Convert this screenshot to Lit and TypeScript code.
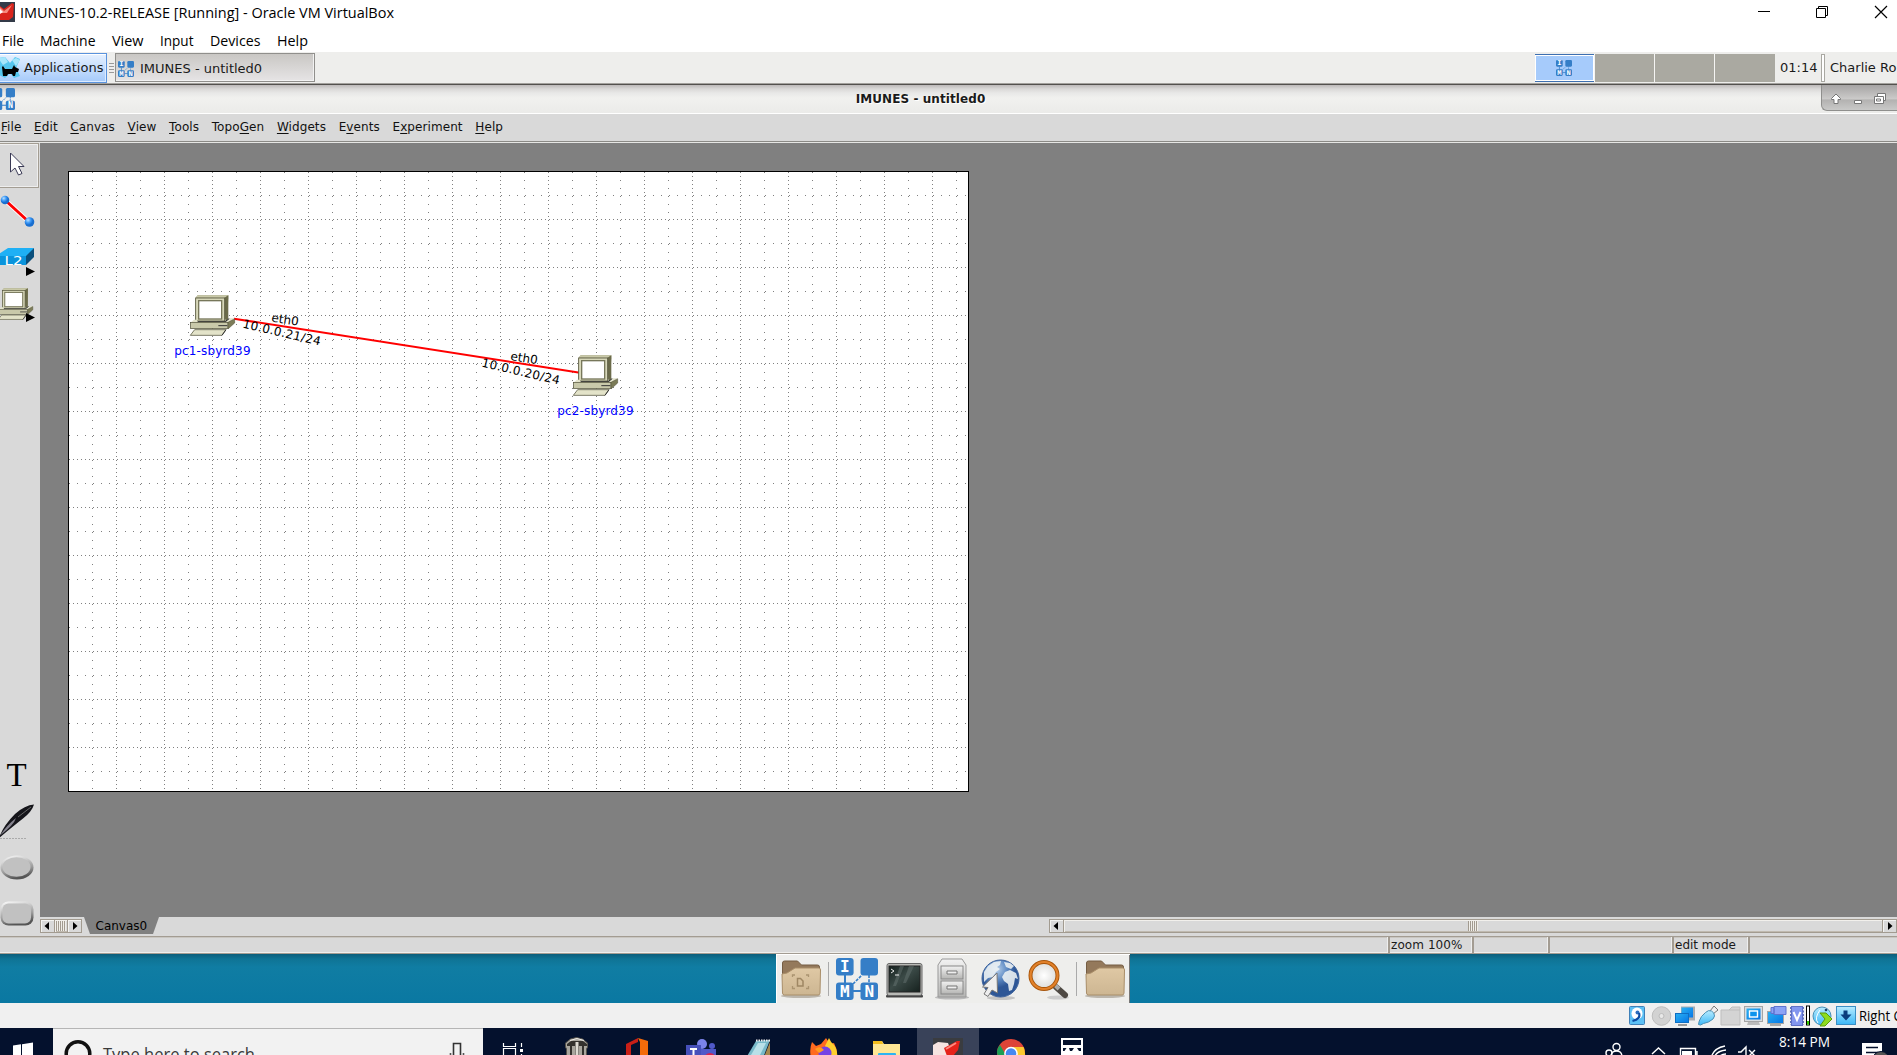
import { LitElement, html, svg, css, TemplateResult } from "lit";
import { customElement } from "lit/decorators.js";

/* ---------- shared drawing helpers ---------- */

const label = (text: string, width: number, height: number, base: number, cls = "seg15") => html`
  <svg class="lbl" width=${width} height=${height}><text class=${cls} x="0" y=${base} textLength=${width} lengthAdjust="spacingAndGlyphs">${text}</text></svg>`;

const logo = (size: number, leftLetters = true) => html`
  <svg class="lbl" width=${size} height=${size} viewBox="0 0 42 42">
    <path d="M17 26l9-9M33 17v9" stroke="#357ec7" stroke-width="1.6" stroke-dasharray="3 1.2" fill="none"/>
    <path d="M9 17v9M17 33h9" stroke="#357ec7" stroke-width="2" fill="none"/>
    <g fill="#357ec7"><rect width="17.6" height="17.6" rx="3"/><rect x="24.5" width="17.5" height="17.6" rx="3"/><rect y="24.5" width="17.6" height="17.5" rx="3"/><rect x="24.5" y="24.5" width="17.5" height="17.5" rx="3"/></g>
    <g class=${size < 20 ? "mono tiny" : "mono"} fill="#fff">${leftLetters ? svg`<text x="8.8" y="14.200">I</text><text x="8.8" y="38.500">M</text>` : ""}<text x="33.3" y="38.5">N</text></g>
  </svg>`;

/* Beige desktop computer, drawn on a 135 x 123 grid. */
const pc = svg`
  <path d="M17 8 23 1h92v9l-4 62H17z" fill="#8d8d6c"/>
  <path d="M17 8 23 1h92l-12 8z" fill="#c9c9a8"/><path d="M103 9l12-8v70l-9 7z" fill="#6b6b4a"/>
  <rect x="17" y="9" width="87" height="69" fill="#d8d8ba" stroke="#55553c" stroke-width="2.5"/>
  <rect x="26" y="17" width="69" height="55" fill="#fff" stroke="#77775a" stroke-width="4"/>
  <path d="M22 78h84l12-9v9l-8 5H22z" fill="#111"/>
  <path d="M1 83 12 74h8l3 6h85l12-10h14l-18 13z" fill="#e4e4cc"/>
  <rect x="1" y="82" width="113" height="19" fill="#c9c9aa" stroke="#4c4c36" stroke-width="2"/>
  <path d="M114 82l20-11v13l-20 18z" fill="#7c7c58" stroke="#4c4c36" stroke-width="1.5"/>
  <path d="M85 92h27" stroke="#333" stroke-width="3"/>
  <path d="M14 104h94l-12 17H1z" fill="#e3e3c9" stroke="#5b5b42" stroke-width="2.4"/><path d="M96 121l12-17" stroke="#333" stroke-width="3"/>`;

const folder = (mark: boolean) => html`
  <svg class="lbl" width="48" height="49" viewBox="0 0 48 49">
    <defs><linearGradient id="fg" x2="0" y2="1"><stop stop-color="#dfc8a4"/><stop offset="1" stop-color="#cdb692"/></linearGradient></defs>
    <ellipse cx="24" cy="41" rx="20" ry="2" fill="#bbb6ad"/>
    <path d="M5.500 8q0-2 2-2h13l4 4h16q2 0 2 2v10H5.500z" fill="#94795b" stroke="#755d43"/>
    <path d="M5 19l5-1 8-5h24q1.500 0 1.500 2l-.5 23q0 2-2 2H7.500q-2 0-2-2z" fill="url(#fg)" stroke="#a98e69"/>
    ${mark ? svg`<path d="M20.500 23.500h3l2.500 2.500v5h-5.500z" fill="none" stroke="#9f8763" stroke-width="1.500"/><path d="M15.500 22v-2h2.500M29 20h2.500v2M15.500 31v2.500h2.500M29 33.500h2.500V31" fill="none" stroke="#ab9470" stroke-width="1.300"/>` : ""}
  </svg>`;

@customElement("app-root")
export class AppRoot extends LitElement {
  static styles = css`
    :host { display: block; width: 1897px; height: 1055px; overflow: hidden; background: #fff; font: 12px "DejaVu Sans", sans-serif; color: #1a1a1a; }
    * { box-sizing: border-box; }
    .screen { display: flex; flex-direction: column; width: 1897px; height: 1055px; overflow: hidden; white-space: nowrap; }
    svg { display: block; flex: none; overflow: hidden; }
    .lbl { overflow: visible; }
    .seg15 { font: 15px "Open Sans", sans-serif; fill: #000; }
    .seg18 { font: 18px "Open Sans", sans-serif; fill: #3a3a3a; }
    .clock { font: 15px "Open Sans", sans-serif; fill: #fff; }
    .mono { font: bold 16px "DejaVu Sans Mono", monospace; text-anchor: middle; }
    .mono.tiny { font: bold 19px "Liberation Mono", monospace; text-rendering: geometricPrecision; }

    .wintitle { display: flex; height: 26px; padding: 0 8px 0 0; }
    .wintitle .name { margin-left: 5px; }
    .wintitle .ctl { margin-left: auto; }
    .winmenu { display: flex; height: 26px; padding-left: 1.5px; gap: 16.5px; }

    .panel { display: flex; height: 33px; background: #eeeeec; border-bottom: 1px solid #53514e; box-shadow: inset 0 -1px #a3a19d; }
    .apps { display: flex; width: 107px; height: 30px; margin-top: 1px; border: 1px solid #5a93dd; border-left: 0; box-shadow: inset 0 1px #fff, inset -1px -1px #dcebff; background: linear-gradient(#e6f1ff, #a5cafa); font-size: 13px; line-height: 28px; }
    .grip { width: 5px; height: 10px; margin: 11px 1px 0 2px; background: repeating-linear-gradient(#999 0 1px, #eee 1px 3px); }
    .task { display: flex; width: 200px; height: 29px; margin-top: 1px; border: 1px solid #908f8c; background: linear-gradient(#c9c7c4, #e6e4e5); box-shadow: inset -1px -1px #f2f2f2; font-size: 13px; line-height: 30px; padding: 7px 0 0 2px; }
    .task span { margin: -7px 0 0 6px; }
    .pager { display: flex; margin: 2px 0 0 auto; height: 28px; gap: 1px; background: #f5f5f3; }
    .pager div { width: 59px; height: 28px; background: #aaa9a1; }
    .pager .last { width: 60px; }
    .pager .on { display: flex; justify-content: center; padding: 5px 2px 0 0; background: #a6cbfb; border: 1px solid #3d6fb0; border-width: 1px 0; box-shadow: inset 0 0 0 1px #fff; }
    .time { width: 46px; font-size: 13px; line-height: 31px; padding-left: 5px; }
    .sep { width: 4px; height: 28px; margin-top: 2px; border: 1px solid #a9a8a2; background: #fff; }
    .user { width: 72px; overflow: hidden; padding-left: 5px; font-size: 13px; line-height: 31px; }

    .apptitle { display: grid; grid-template-columns: 76px 1fr 76px; height: 29px; border-bottom: 1px solid #fff; background: linear-gradient(#bcb9b9 0, #dad9d8 4px, #e8e8e7 8px, #f1f1ef 13px, #ebebe9 100%); }
    .apptitle .ico { padding-top: 3px; }
    .apptitle b { text-align: center; line-height: 29px; padding-right: 56px; text-shadow: 1px 1px #fff; color: #1a1a1a; letter-spacing: .08px; }
    .wbtn { height: 26px; border: solid #8f8f8d; border-width: 0 0 1px 1px; border-bottom-left-radius: 6px; background: linear-gradient(#a6a4a4, #cbcac9 55%, #b3b2b1 60%, #c9c9c8); overflow: hidden; }

    .menu { display: flex; gap: 12.7px; height: 29px; padding-left: 1px; background: #d9d9d9; line-height: 26px; letter-spacing: .08px; border-bottom: 1px solid #e6e6e4; box-shadow: inset 0 -1px #8b8a86; color: #111; }
    .menu u { text-underline-offset: 2px; text-decoration-thickness: 1px; }

    .body { display: flex; height: 793px; background: #d9d9d9; }
    .tools { display: flex; flex-direction: column; width: 40px; }
    .tools .gap { flex: 1; }
    .tool { height: 46px; width: 40px; }
    .sel { height: 45px; width: 39px; margin-bottom: 1px; border: 1px solid #a39d93; border-left: 0; box-shadow: inset -1px -1px #eee, inset 0 1px #eee; }
    .work { display: flex; flex-direction: column; width: 1857px; }
    .area { height: 774px; background: #808080; padding: 28px 0 0 28px; }
    .grid { stroke: #808080; fill: none; shape-rendering: crispEdges; }
    .net { font: 12px "DejaVu Sans", sans-serif; }
    .ip { letter-spacing: .28px; }
    .node { fill: #0000ff; text-anchor: middle; letter-spacing: .15px; }

    .tabs { display: flex; height: 19px; }
    .hs { display: flex; height: 14px; margin-top: 2px; background: #d9d9d9; border: 1px solid #a29b90; }
    .hs.small { width: 42px; }
    .hs .b { width: 13px; height: 12px; box-shadow: inset 1px 1px #f4f4f2; }
    .hs .thumb { flex: 1; border: solid #a29b90; border-width: 0 1px; box-shadow: inset 1px 1px #f2f0ec, inset 0 -1px #c0bab0; display: flex; justify-content: center; }
    .lines { width: 10px; height: 10px; margin-top: 1px; background: repeating-linear-gradient(90deg, #a29b90 0 1px, #f0eee9 1px 2px); }
    .hs.big { width: 848px; margin-left: auto; }
    .tab { margin-left: 2px; }

    .status { display: flex; height: 18px; background: #d9d9d9; border-top: 1px solid #a39c92; border-bottom: 1px solid #a39c92; line-height: 16px; box-shadow: inset 0 1px #c9c6c1, inset 0 -1px #f0efec; }
    .status div { border-right: 2px solid #a39c92; padding-left: 1px; box-shadow: inset -1px 0 #eee; }
    .c0 { width: 1390px; } .c1 { width: 84px; letter-spacing: .08px; } .c2 { width: 76px; } .c3 { width: 124px; } .c4 { width: 76px; }

    .desk { display: flex; height: 49px; padding-left: 776px; background: linear-gradient(#0c5e7b 0, #0f7495 5px, #107da3 13px, #0a78a2 100%); }
    .dock { display: flex; width: 354px; height: 49px; background: #eeeeec; border: solid #fff; border-width: 1px 0 0 1px; box-shadow: inset -1px 0 #777; }
    .dsep { width: 8px; height: 34px; margin-top: 7px; background: linear-gradient(90deg, transparent 3px, #aaa 3px 4px, transparent 4px); }

    .vbstat { display: flex; justify-content: flex-end; height: 25px; background: #f0f0f0; }
    .right { width: 40px; padding-left: 2px; overflow: hidden; }

    .bar { display: flex; height: 27px; background: #04112d; overflow: hidden; }
    .start { width: 53px; }
    .search { display: flex; width: 430px; height: 27px; background: #f2f2f2; border-top: 1px solid #b5b5b5; }
    .app { width: 62px; height: 27px; }
    .app.on { background: #394259; }
    .tray { margin-left: auto; }
  `;

  private menuItem([a, k, b]: string[]) {
    return html`<span>${a}<u>${k}</u>${b}</span>`;
  }

  private canvas(): TemplateResult {
    const cols = Array.from({ length: 37 }, (_, i) => i + 1);
    const rows = Array.from({ length: 25 }, (_, i) => i + 1);
    const dash = (i: number) => (i % 2 ? "1 7" : "1 3");
    return html`<svg width="901" height="621">
      <rect width="901" height="621" fill="#fff"/>
      <g class="grid">
        ${cols.map((i) => svg`<path d="M${i * 24 + 0.5} 1V620" stroke-dasharray=${dash(i)}/>`)}
        ${rows.map((i) => svg`<path d="M1 ${i * 24 + 0.5}H900" stroke-dasharray=${dash(i)}/>`)}
      </g>
      <rect x=".5" y=".5" width="900" height="620" fill="none" stroke="#000"/>
      <path d="M166 147.700 512 201.700" stroke="#f00" stroke-width="2"/>
      <g class="net">
        <text transform="translate(203 150.500) rotate(9)">eth0</text>
        <text class="ip" transform="translate(174 156.500) rotate(13)">10.0.0.21/24</text>
        <text transform="translate(442 189) rotate(9)">eth0</text>
        <text class="ip" transform="translate(413 195.500) rotate(13)">10.0.0.20/24</text>
        <text class="node" x="144.500" y="184">pc1-sbyrd39</text>
        <text class="node" x="527.500" y="244">pc2-sbyrd39</text>
      </g>
      <g transform="translate(122 124) scale(.3333)">${pc}</g>
      <g transform="translate(505 184) scale(.3333)">${pc}</g>
    </svg>`;
  }

  private tools() {
    return html`<div class="tools">
      <div class="sel"><svg width="38" height="43"><path d="M10.500 9v19l4.500-4 3.500 7 3.500-1.500-3.500-7h5.500z" fill="#fff" stroke="#3a3a55" stroke-width="1"/></svg></div>
      <svg class="tool"><defs><radialGradient id="bb" cx=".35" cy=".3"><stop stop-color="#b9e0ff"/><stop offset=".6" stop-color="#3a97f5"/><stop offset="1" stop-color="#1a6fd0"/></radialGradient></defs>
        <path d="M5 11 29 33" stroke="#fff" stroke-width="4.500"/><path d="M5 11 29 33" stroke="#f00" stroke-width="3"/><circle cx="5" cy="11" r="4.300" fill="url(#bb)"/><circle cx="29.500" cy="33" r="4.800" fill="url(#bb)"/></svg>
      <svg class="tool"><path d="M-6 22 8 13h26l-7 9z" fill="#1fb0f5"/><path d="M-6 21h32v9H-6z" fill="#0a94dc"/><path d="M26 21l8-8v9l-8 8z" fill="#0a4f7c"/>
        <text x="4.500" y="29.500" textLength="18" lengthAdjust="spacingAndGlyphs" fill="#fff" font-size="12.500">L2</text><path d="M26 32l9 4.500-9 4.500z"/></svg>
      <svg class="tool"><g transform="translate(-2 7) scale(.26)">${pc}</g><path d="M26 32l9 4.500-9 4.500z"/></svg>
      <div class="gap"></div>
      <svg class="tool"><text x="6.500" y="34" font-family="Liberation Serif, serif" font-size="33">T</text></svg>
      <svg class="tool"><path d="M0 40.500h27" stroke="#aaa" fill="none" stroke-dasharray="2 1"/><path d="M-1 40Q3 28 15 16 25 7 34 6.500q-2 7-11 14T-1 40z" fill="#15151a"/><path d="M0 37.500Q7 27 16 20q-2 7-16 17.500z" fill="#85838e"/><path d="M18 19 31 9" stroke="#666"/></svg>
      <svg class="tool"><defs><linearGradient id="eg" x2=".3" y2="1"><stop stop-color="#fff"/><stop offset=".3" stop-color="#d4d4d4"/><stop offset=".7" stop-color="#999"/><stop offset="1" stop-color="#555"/></linearGradient></defs><ellipse cx="17" cy="23.500" rx="16.500" ry="12" fill="url(#eg)"/><ellipse cx="16.500" cy="23" rx="14" ry="9.800" fill="#c1c1c1"/></svg>
      <svg class="tool"><rect x=".5" y="11.500" width="33" height="24" rx="8" fill="url(#eg2)"/><defs><linearGradient id="eg2" x2=".3" y2="1"><stop stop-color="#fff"/><stop offset=".3" stop-color="#d4d4d4"/><stop offset=".7" stop-color="#999"/><stop offset="1" stop-color="#555"/></linearGradient></defs><rect x="2.500" y="13.500" width="28.500" height="20" rx="6" fill="#c1c1c1"/></svg>
    </div>`;
  }

  private dock() {
    return html`<div class="dock">
      ${folder(true)}<div class="dsep"></div>
      <svg width="48" height="48" viewBox="-3 -3 48 48">${logo(42)}</svg>
      <svg width="48" height="48"><defs><linearGradient id="tg" x2="1" y2="1"><stop stop-color="#15211e"/><stop offset=".45" stop-color="#3b4a47"/><stop offset="1" stop-color="#16211e"/></linearGradient></defs>
        <rect x="5" y="40" width="37" height="2.500" rx="1" fill="#444"/><rect x="6" y="8.500" width="35" height="32" rx="2" fill="#b9bab6" stroke="#666"/><rect x="8" y="11" width="31" height="26" fill="url(#tg)" stroke="#222"/><path d="M28 11h5l-8 17h-3zM19 11h4l-8 20h-3z" fill="#6b7875" opacity=".45"/><path d="M10 14l3 2-3 2M14 20h4" stroke="#eee" fill="none"/></svg>
      <svg width="48" height="48"><defs><linearGradient id="cg" x2="0" y2="1"><stop stop-color="#f2f2f2"/><stop offset="1" stop-color="#b5b5b3"/></linearGradient></defs>
        <ellipse cx="23" cy="42.500" rx="17" ry="2" fill="#bbb"/><path d="M9 10l4-6h20l4 6v32H9z" fill="url(#cg)" stroke="#999"/><rect x="12" y="11" width="22" height="13" fill="url(#cg)" stroke="#888"/><rect x="12" y="26" width="22" height="13" fill="url(#cg)" stroke="#888"/><path d="M18 19v-3h10v3zM18 34v-3h10v3z" fill="#eee" stroke="#777"/></svg>
      <svg width="48" height="48"><defs><radialGradient id="gg" cx=".4" cy=".25"><stop stop-color="#b8d0ea"/><stop offset=".55" stop-color="#5f8bc4"/><stop offset="1" stop-color="#2d5696"/></radialGradient></defs>
        <ellipse cx="24" cy="43" rx="14" ry="2" fill="#c4c4c4"/><circle cx="23.500" cy="23.500" r="18.500" fill="url(#gg)" stroke="#3d629c"/><path d="M7 17l4-6 6-4 7-1-1 4-3 2 3 2-4 3-3 5-5 1-4 4zM27 7l6 1 4 3-3 3-5-2zM28 17l5-2 6 3 2 6-3-1-1 6-2 6-3 1-1-7-4-3-2-4z" fill="#eef2f4" opacity=".88"/><path d="M20 18 5.500 32l5.500.5-4 6.500 4 2.500 4-6.500 5.500 3z" fill="#eee" stroke="#777"/></svg>
      <svg width="48" height="48"><defs><radialGradient id="mg"><stop stop-color="#fff"/><stop offset="1" stop-color="#dcdcda"/></radialGradient></defs><ellipse cx="33" cy="42.500" rx="11" ry="2" fill="#ccc"/><path d="M31 32l9 8" stroke="#4e4943" stroke-width="6" stroke-linecap="round"/><path d="M30 30l4 4" stroke="#aaa" stroke-width="4"/><circle cx="19" cy="20.500" r="13.500" fill="url(#mg)" stroke="#a75409" stroke-width="4"/><circle cx="19" cy="20.500" r="13.500" fill="none" stroke="#e2812a" stroke-width="2.200"/></svg>
      <div class="dsep"></div>${folder(false)}
    </div>`;
  }

  private vbIcons() {
    const s = (body: unknown) => html`<svg width="23" height="25">${body}</svg>`;
    return [
      s(svg`<defs><linearGradient id="lb" x2="0" y2="1"><stop stop-color="#b9ecff"/><stop offset="1" stop-color="#3db8f7"/></linearGradient><linearGradient id="db" x2="1" y2="1"><stop stop-color="#2bb1f2"/><stop offset="1" stop-color="#0576e6"/></linearGradient></defs><rect x="2.500" y="3.500" width="15" height="18" rx="1" fill="#5cc0f5" stroke="#3f80b8"/><ellipse cx="10" cy="10.500" rx="5.500" ry="6" fill="#fff"/><circle cx="10.500" cy="9.500" r="2" fill="#2d6fc0"/><path d="M12 10q2 6-6.500 8" stroke="#0b4ba3" stroke-width="2.200" fill="none"/>`),
      s(svg`<circle cx="11.500" cy="13" r="9.300" fill="#d2d2d2" stroke="#bdbdbd"/><circle cx="11.500" cy="13" r="2.500" fill="#e8e8e8" stroke="#bbb"/>`),
      s(svg`<path d="M8 17.500h14v-14H8z" fill="#a9acb0"/><rect x="8.500" y="4.500" width="11.500" height="10" fill="url(#db)"/><rect x="2" y="10" width="14" height="10" fill="#fff"/><rect x="2.500" y="10.500" width="13" height="9" fill="url(#db)" stroke="#0e6fc4"/><path d="M5 22h9" stroke="#999" stroke-width="2"/>`),
      s(svg`<path d="M14 8l4-5 4 4-5 4z" fill="#eee" stroke="#777"/><path d="M2.500 21.500q0-3 3-8l4-4q3-3 6-1.500t3 5q0 3-6 6l-5 1.500-3 1.500z" fill="url(#lb)" stroke="#4a90b5"/>`),
      s(svg`<path d="M2 7h8l3-3h8v18H2z" fill="#d4d4d4" stroke="#bdbdbd"/><path d="M10 7h11" stroke="#bdbdbd"/>`),
      s(svg`<rect x="2.500" y="3.500" width="18" height="15" fill="#d8dde2" stroke="#a5a5a5"/><rect x="4.500" y="5.500" width="14" height="11" fill="url(#db)"/><rect x="7.500" y="8" width="8" height="6" fill="#0c93ed" stroke="#fff" stroke-width="1.400"/><path d="M5 22l1-3h11l1 3z" fill="#bbb"/>`),
      s(svg`<rect x="2.500" y="8.500" width="16" height="12" fill="url(#db)" stroke="#a5a5a5"/><path d="M5 22h11" stroke="#aaa" stroke-width="2"/><path d="M6 4.500h3v6H6zM9 3.500h12v8H9z" fill="#8ba2f5" stroke="#5f73cf"/>`),
      s(svg`<rect x="3.500" y="3.500" width="11" height="19" fill="#8296ef" stroke="#5f70c5"/><path d="M2.500 4v18M15.500 4v18" stroke="#5f70c5" stroke-dasharray="2 1.500"/><path d="M5.500 9 9 17l3.500-8" fill="none" stroke="#fff" stroke-width="2"/><rect x="18.500" y="3" width="3" height="19" fill="#fff" stroke="#000"/><rect x="19" y="18" width="2" height="3.500" fill="#3c0"/>`),
      s(svg`<circle cx="11" cy="13" r="9" fill="url(#lb)" stroke="#4a90b5"/><path d="M7 20q-4-5 2-13" stroke="#fff" fill="none"/><path d="M9 10h6l6 6-7 7h-5l5-7z" fill="#8ddc1e" stroke="#599c0c"/><circle cx="15" cy="7" r="1.300" fill="#246"/>`),
      s(svg`<rect x="2.500" y="3.500" width="19" height="18" fill="url(#lb)" stroke="#3b8fc5"/><path d="M9.500 7.500h4v4h4l-5.500 6-5.500-6h3z" fill="#0b3d7d"/>`),
    ];
  }

  private apps() {
    const a = (body: unknown, on = false) => html`<svg class="app ${on ? "on" : ""}">${body}</svg>`;
    return [
      a(svg`<path d="M20.500 15v3.500h12v-3.500M20.500 29v-8.500h12v8.500M38.500 15v4M38.500 26v4" stroke="#fff" fill="none" stroke-width="1.200"/><rect x="37" y="21" width="3" height="3" fill="#fff"/>`),
      a(svg`<path d="M21.500 28v-7l-1-2v-4l5-4 6-1.500 6 1.500 5 4v4l-1 2v7z" fill="#a9a69e" stroke="#55524c"/><path d="M25 28V18h-3v-2l4-3h12l4 3v2h-3v10h-2V18h-3v10h-4V18h-3v10z" fill="#33312d"/><path d="M30.500 28V14h3v14z" fill="#dedbd3"/><path d="M25 12.500l7-2 7 2" stroke="#eceae4" fill="none"/>`),
      a(svg`<path d="M19 28V16l12-6v4l-7 3v11z" fill="#c91f17"/><path d="M31 10l10 3v15h-8V14z" fill="#f36b0a"/>`),
      a(svg`<circle cx="33" cy="16" r="5" fill="#7b83eb"/><circle cx="43" cy="18" r="3" fill="#5059c9"/><path d="M30 21h17v8H30z" fill="#5059c9"/><rect x="17" y="17" width="15" height="13" fill="#4650bb"/><path d="M21 21h7M24.500 21v8" stroke="#fff" stroke-width="2"/><circle cx="41" cy="31" r="6" fill="#d5244f"/>`),
      a(svg`<path d="M25 13l14-1-7 18H15z" fill="#78b9c9"/><path d="M27 15h8l-6 12h-9z" fill="#b9e0e8"/><path d="M39 14v15h-6z" fill="#a5874e"/><path d="M25 12.500h15" stroke="#eee" stroke-width="2" stroke-dasharray="1.500 1"/>`),
      a(svg`<path d="M18 30q-2-9 1-16l4 4 5-2 5-6 4 6 4-1q4 7 3 16z" fill="#ff6a1f"/><path d="M32 18l4-8q2 5 5 7 4 5 3 13h-8z" fill="#ffd02e"/><circle cx="32" cy="25" r="6.500" fill="#7542e5"/><path d="M22 21q5-4 9 1l-5 3z" fill="#ff9b1f"/>`),
      a(svg`<path d="M18 13h9l2 3h16v14H18z" fill="#ffe694"/><path d="M18 13h9l1 3H18z" fill="#f3bd1d"/><rect x="23" y="25" width="18" height="5" rx="1" fill="#2cb4f2"/>`),
      a(svg`<rect x="16" y="10" width="30" height="18" fill="#3a3c40"/><path d="M16 28V17l5-3 10 1 2 5 3 8z" fill="#f6e4e1"/><path d="M27 20l13-7h3l-2 9-5 6h-6z" fill="#e6231b"/><path d="M29 21l10-6" stroke="#ff8a80" stroke-width="2"/>`, true),
      a(svg`<circle cx="32" cy="25" r="14" fill="#dd4437"/><path d="M18 25q0-5 3-8l7 12h-9z" fill="#1b9e54"/><path d="M32 19h12.500q2 4 1.500 9H34z" fill="#fcca2f"/><circle cx="32" cy="25.500" r="6.800" fill="#fff"/><circle cx="32" cy="25.500" r="5.300" fill="#4688f1"/>`),
      a(svg`<path d="M20 10h22v18H20z" fill="#fff"/><rect x="22" y="12" width="18" height="5" fill="#04112d"/><path d="M22 20h3.500l-2 3H22zM28 20h5l-2 3h-2zM36 20h4v3h-2z" fill="#04112d"/>`),
    ];
  }

  render() {
    const winMenu: [string, number][] = [["File", 22], ["Machine", 55.5], ["View", 31.5], ["Input", 33.5], ["Devices", 50.5], ["Help", 31]];
    const menu = [["", "F", "ile"], ["", "E", "dit"], ["", "C", "anvas"], ["", "V", "iew"], ["", "T", "ools"], ["Topo", "G", "en"], ["", "W", "idgets"], ["E", "v", "ents"], ["E", "x", "periment"], ["", "H", "elp"]];
    return html`<div class="screen">
      <div class="wintitle">
        <svg width="15" height="26"><rect y="2" width="15" height="20" fill="#333a48"/><path d="M0 6l4 3 8-6 2 1-1 13-4 3H0z" fill="#d9241c"/><path d="M0 7l4 4 8-6-5 8H0z" fill="#f58a7e"/><path d="M0 9l3 3-3 2z" fill="#fff"/></svg>
        <div class="name">${label("IMUNES-10.2-RELEASE [Running] - Oracle VM VirtualBox", 374, 26, 18)}</div>
        <svg class="ctl" width="131" height="26"><path d="M0 11.500h12M58.500 8.500h9v9h-9zM60.500 8.500v-2h9v9h-2" fill="none" stroke="#000"/><path d="M117 6l12 12M129 6l-12 12" stroke="#000" stroke-width="1.200"/></svg>
      </div>
      <div class="winmenu">${winMenu.map(([t, w]) => label(t, w, 26, 20))}</div>

      <div class="panel">
        <div class="apps">
          <svg width="24" height="28"><path d="M-2 4l7-1 5 6 5-6 5 2-4 9 4 8-6 2-4-5-5 5-6-3z" fill="#55c6ee"/><path d="M-2 4l7-1 3 5-5 3zM12 6l4-2 4 2-4 6z" fill="#a6e6fb"/><path d="M2 13l1-1 2 3h7l2-4 1 2 4 2-1 3h-2l-1 4h-2l-1-2H8l-1 2H3z" fill="#000"/></svg>
          <span>Applications</span>
        </div>
        <div class="grip"></div>
        <div class="task">${logo(16)}<span>IMUNES - untitled0</span></div>
        <div class="pager"><div class="on">${logo(16)}</div><div></div><div></div><div class="last"></div></div>
        <div class="time">01:14</div><div class="sep"></div><div class="user">Charlie Ro</div>
      </div>

      <div class="apptitle">
        <div class="ico"><svg width="15" height="22" viewBox="7 0 15 22"><g>${logo(22, false)}</g></svg></div>
        <b>IMUNES - untitled0</b>
        <div class="wbtn"><svg width="76" height="26"><g fill="#fff" stroke="#777"><path d="M14 9l4.500 4.500v1h-2.500v4h-4v-4H9.500v-1z"/><path d="M32.500 15.500h7v3h-7z"/><path d="M55.500 8.500h8v7h-8z"/><path d="M52.500 11.500h9v7h-9z"/><path d="M54.500 14h4v2h-4z"/></g><path d="M75 10l4 4-4 4" stroke="#777"/></svg></div>
      </div>

      <div class="menu">${menu.map((m) => this.menuItem(m))}</div>

      <div class="body">
        ${this.tools()}
        <div class="work">
          <div class="area">${this.canvas()}</div>
          <div class="tabs">
            <div class="hs small">
              <svg class="b" viewBox="0 0 13 12"><path d="M8 2v8L3.500 6z"/></svg><div class="thumb"><div class="lines"></div></div><svg class="b" viewBox="0 0 13 12"><path d="M5 2v8l4.500-4z"/></svg>
            </div>
            <svg class="tab" width="76" height="17"><path d="M0 0h75l-6 17H6z" fill="#808080"/><text x="11.500" y="13">Canvas0</text></svg>
            <div class="hs big">
              <svg class="b" viewBox="0 0 13 12"><path d="M8 2v8L3.500 6z"/></svg><div class="thumb"><div class="lines"></div></div><svg class="b" viewBox="0 0 13 12"><path d="M5 2v8l4.500-4z"/></svg>
            </div>
          </div>
        </div>
      </div>

      <div class="status"><div class="c0"></div><div class="c1">zoom 100%</div><div class="c2"></div><div class="c3"></div><div class="c4">edit mode</div></div>
      <div class="desk">${this.dock()}</div>

      <div class="vbstat">${this.vbIcons()}<div class="right">${label("Right Ctrl", 56, 25, 18)}</div></div>

      <div class="bar">
        <svg class="start"><path d="M13 17.500l8-1.200V27h-8zM22 16.200l11-1.700V27H22z" fill="#fff"/></svg>
        <div class="search">
          <svg width="50" height="26"><circle cx="25" cy="24.500" r="11.800" fill="none" stroke="#111" stroke-width="3.500"/></svg>
          ${label("Type here to search", 152, 26, 32, "seg18")}
          <svg width="228" height="26"><path d="M198.500 28V14.500h7V28" fill="none" stroke="#333" stroke-width="1.600"/><path d="M195.500 24v4M208.500 24v4" stroke="#555" stroke-width="1.600"/></svg>
        </div>
        ${this.apps()}
        <svg class="tray" width="297" height="27">
          <g stroke="#fff" fill="none" stroke-width="1.400"><circle cx="16.500" cy="19" r="3.500"/><path d="M11 29q0-6 5.500-6t5.500 6"/><circle cx="9" cy="25" r="3"/><path d="M52 26l6.500-6 6.500 6M80.500 20.500h15v8h-15zM97 23v5M114 30q2-7 12-8M112 27q3-7 13-9M118 31q2-5 8-5M138 24h3l5-5v12M149 22l6 6M155 22l-6 6"/></g>
          <rect x="82" y="23" width="10" height="6" fill="#fff"/>
          <text class="clock" x="179" y="19" textLength="51" lengthAdjust="spacingAndGlyphs">8:14 PM</text>
          <path d="M262 15h20v16h-20z" fill="#fff"/><path d="M266 19.500h12M266 24.500h12" stroke="#04112d" stroke-width="1.500"/><circle cx="281" cy="32" r="8.500" fill="#555" stroke="#04112d"/>
        </svg>
      </div>
    </div>`;
  }
}
